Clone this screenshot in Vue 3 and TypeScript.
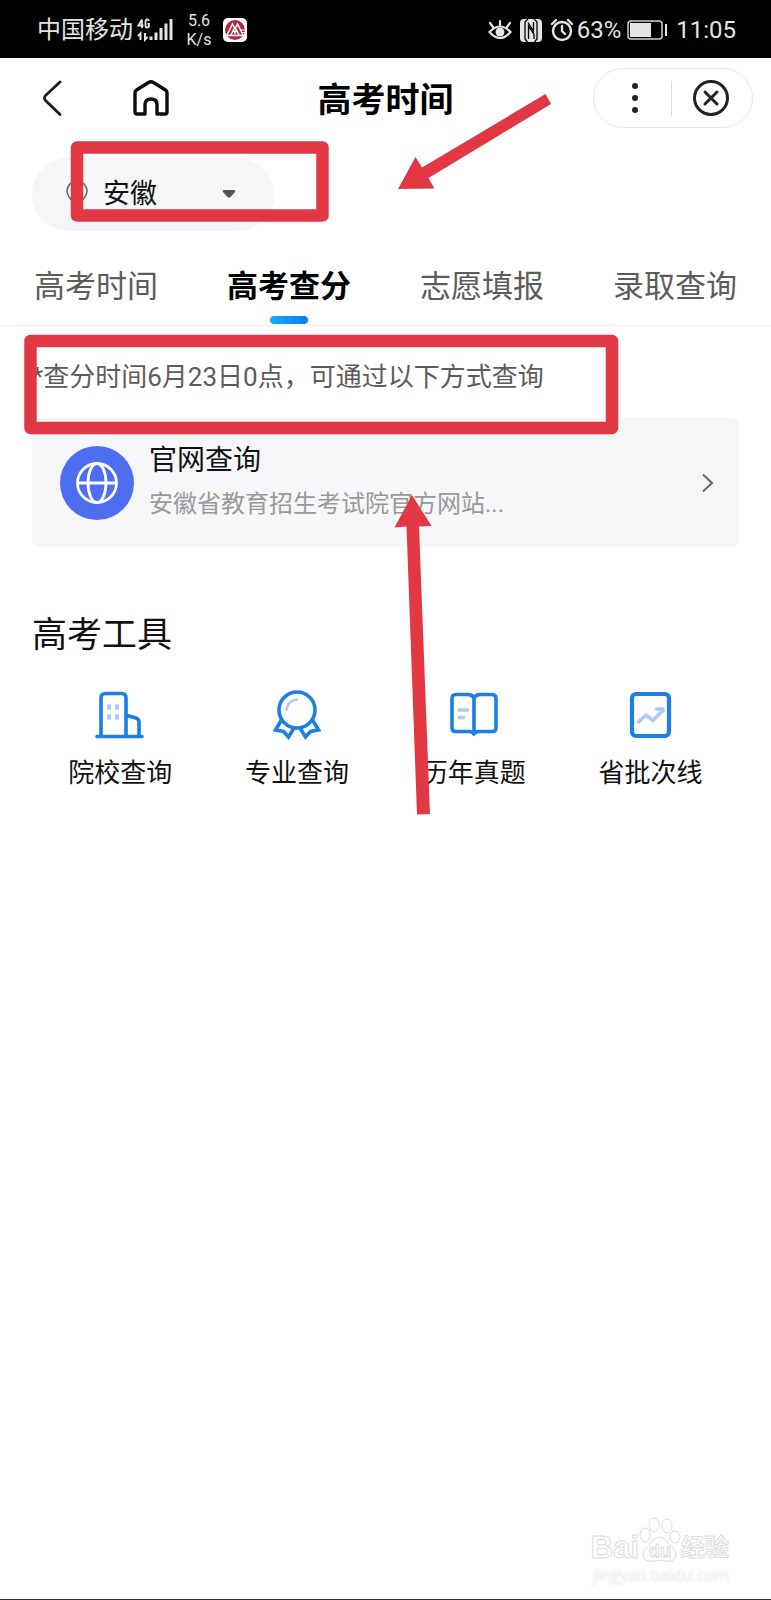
<script setup lang="ts">
import { ref } from 'vue'

interface Tool {
  id: string
  label: string
}

const provinces: string[] = ['安徽', '北京', '江苏', '浙江']
const province = ref<string>('安徽')

const tabs: string[] = ['高考时间', '高考查分', '志愿填报', '录取查询']
const activeTab = ref<string>('高考查分')

const tools: Tool[] = [
  { id: 'school', label: '院校查询' },
  { id: 'major', label: '专业查询' },
  { id: 'papers', label: '历年真题' },
  { id: 'lines', label: '省批次线' },
]
</script>

<template>
  <div class="page">
    <div class="status">
      <div class="status-side">
        <span class="carrier">中国移动</span>
        <svg class="signal" width="36" height="24" viewBox="0 0 36 24" fill="none" stroke="#e4e4e4">
          <path d="M5 1.500L1.500 7.500H6.500M5 1.500V10M12 3Q11.500 1.500 10 1.500Q8.500 1.500 8.500 4V7.500Q8.500 9.500 10 9.500Q12 9.500 12 7.500V6H10.500" stroke-width="1.800" />
          <path d="M3.500 22V15.500L1 18M8 15V21.500L10.500 19" stroke-width="2" />
          <path d="M14 22V18.500M19 22V14.500M24 22V10M29 22V5.500M34 22V1" stroke-width="3" />
        </svg>
        <span class="speed"><span>5.6</span><span>K/s</span></span>
        <svg class="bank" width="24" height="24" viewBox="0 0 24 24">
          <rect width="24" height="24" rx="5" fill="#fff" />
          <circle cx="12" cy="12" r="10" fill="#b5253c" />
          <path d="M4 17L9.500 6L12 11L14.500 6L20 17M8 17L10.500 12L12 15L13.500 12L16 17M3 17.500H21" fill="none" stroke="#fff" stroke-width="1.500" />
          <path d="M17 12H23M18 14.500H23" stroke="#fff" stroke-width="1" />
        </svg>
      </div>
      <div class="status-side">
        <svg width="24" height="22" viewBox="0 0 24 22" fill="none" stroke="#e4e4e4" stroke-width="2.200" stroke-linecap="round">
          <path d="M1.500 13Q12 2 22.500 13Q12 25 1.500 13ZM12 6V2M5 8L2 4M19 8L22 4" />
          <circle cx="12" cy="13" r="4.500" fill="#e4e4e4" stroke="none" />
        </svg>
        <svg class="nfc" width="22" height="23" viewBox="0 0 22 23">
          <rect width="22" height="23" rx="4" fill="#e4e4e4" />
          <path d="M8 0L5 3V20L7.500 23M8.500 20V7L14 15.500V20M8 3.500L13.500 12V3M14 0L17 3V20L14.500 23" fill="none" stroke="#000" stroke-width="1.300" />
        </svg>
        <svg class="alarm" width="24" height="24" viewBox="0 0 24 24" fill="none" stroke="#e4e4e4" stroke-width="2.400" stroke-linecap="round">
          <circle cx="12" cy="13" r="9" />
          <path d="M12 8V13L15 16M2 6L6 2M22 6L18 2" />
        </svg>
        <span class="battery-text">63%</span>
        <svg class="battery" width="41" height="20" viewBox="0 0 41 20">
          <rect x="1" y="1" width="34" height="18" rx="3" fill="none" stroke="#cfcfcf" stroke-width="1.500" />
          <rect x="3" y="3" width="21" height="14" fill="#e4e4e4" />
          <rect x="38" y="4" width="2" height="12" fill="#e4e4e4" />
        </svg>
        <span class="clock">11:05</span>
      </div>
    </div>

    <header class="header">
      <div class="nav">
        <button type="button" class="plain" aria-label="返回">
          <svg width="20" height="36" viewBox="0 0 20 36" fill="none" stroke="#1c1c1c" stroke-width="2.800" stroke-linecap="round" stroke-linejoin="round">
            <path d="M18 2L3.500 15.500Q1.500 18 3.500 20.500L18 34.500" />
          </svg>
        </button>
        <button type="button" class="plain" aria-label="主页">
          <svg width="36" height="36" viewBox="0 0 36 36" fill="none" stroke="#0e0e0e" stroke-width="3.400" stroke-linejoin="round">
            <path d="M2 12.500Q2 11 3.500 10L15.500 2.500Q18 1 20.500 2.500L32.500 10Q34 11 34 12.500V32Q34 34 32 34H24V24.500Q24 19 18 19Q12 19 12 24.500V34H4Q2 34 2 32Z" />
          </svg>
        </button>
      </div>
      <h1 class="title">高考时间</h1>
      <div class="capsule">
        <button type="button" class="plain" aria-label="更多">
          <svg width="8" height="32" viewBox="0 0 8 32" fill="#222">
            <circle cx="4" cy="4" r="3" /><circle cx="4" cy="16" r="3" /><circle cx="4" cy="28" r="3" />
          </svg>
        </button>
        <span class="divider"></span>
        <button type="button" class="plain" aria-label="关闭">
          <svg width="38" height="38" viewBox="0 0 38 38" fill="none" stroke="#222" stroke-width="3" stroke-linecap="round">
            <circle cx="19" cy="19" r="16.500" />
            <path d="M13 13L25 25M25 13L13 25" />
          </svg>
        </button>
      </div>
    </header>

    <main>
      <label class="province">
        <svg width="22" height="28" viewBox="0 0 22 28" fill="none" stroke="#666" stroke-width="1.500">
          <path d="M11 26Q1 17 1 11A10 10 0 0 1 21 11Q21 17 11 26Z" />
        </svg>
        <select v-model="province" aria-label="省份">
          <option v-for="p in provinces" :key="p" :value="p">{{ p }}</option>
        </select>
        <svg class="caret" width="14" height="10" viewBox="0 0 14 10" fill="#555">
          <path d="M1.500 1H12.500Q14 1.500 13 3L8.500 8Q7 9.500 5.500 8L1 3Q0 1.500 1.500 1Z" />
        </svg>
      </label>

      <nav class="tabs">
        <button
          v-for="t in tabs"
          :key="t"
          type="button"
          class="tab"
          :class="{ active: t === activeTab }"
          @click="activeTab = t"
        >
          <span>{{ t }}</span>
          <i class="bar"></i>
        </button>
      </nav>

      <p class="notice">*查分时间6月23日0点，可通过以下方式查询</p>

      <a class="card" href="#">
        <svg class="globe" width="74" height="74" viewBox="0 0 74 74" fill="none" stroke="#fff" stroke-width="2.800">
          <circle cx="37" cy="37" r="37" fill="#4e6ef2" stroke="none" />
          <circle cx="37" cy="37" r="19.500" />
          <ellipse cx="37" cy="37" rx="9" ry="19.500" />
          <path d="M17 37H57" />
        </svg>
        <span class="card-text">
          <strong>官网查询</strong>
          <small>安徽省教育招生考试院官方网站...</small>
        </span>
        <svg width="12" height="20" viewBox="0 0 12 20" fill="none" stroke="#666" stroke-width="2">
          <path d="M1 1.500L10 10L1 18.500" />
        </svg>
      </a>

      <section>
        <h2 class="section-title">高考工具</h2>
        <div class="tools">
          <a v-for="tool in tools" :key="tool.id" class="tool" href="#">
            <svg width="50" height="50" viewBox="0 0 50 50" fill="none" stroke="#1a7fe8" stroke-width="3.600" stroke-linecap="round" stroke-linejoin="round">
              <template v-if="tool.id === 'school'">
                <path d="M2 46.500H47M6 46V8Q6 3.500 10.500 3.500H26.500Q31 3.500 31 8V46M32 25.500L41 28Q44 29 44 32V46" />
                <g fill="#a9cbf5" stroke="none">
                  <rect x="12" y="14" width="4" height="6" rx="2" /><rect x="20" y="14" width="4" height="6" rx="2" />
                  <rect x="12" y="24" width="4" height="6" rx="2" /><rect x="20" y="24" width="4" height="6" rx="2" />
                </g>
              </template>
              <template v-else-if="tool.id === 'major'">
                <circle cx="25" cy="20" r="18" />
                <path d="M9.500 30L3.500 40L11.500 41.500L16.500 47L22 38M40.500 30L46.500 40L38.500 41.500L33.500 47L28 38" stroke-linejoin="miter" />
                <path d="M14.500 20Q15.500 10.500 25 9.500" stroke="#a9cbf5" stroke-width="2.500" />
              </template>
              <template v-else-if="tool.id === 'papers'">
                <path d="M25 8Q23 4.500 19 4.500H7Q3 4.500 3 8.500V38Q3 41.500 6.500 41.500H20Q23.500 41.500 25 44Q26.500 41.500 30 41.500H43.500Q47 41.500 47 38V8.500Q47 4.500 43 4.500H31Q27 4.500 25 8ZM25 8V43" />
                <path d="M10 20H18.500M10 27.500H14.500" stroke="#a9cbf5" />
              </template>
              <template v-else>
                <rect x="6" y="4" width="37" height="42" rx="4" stroke-width="4.200" />
                <path d="M12.500 32L20 25L27 30.500L37 20M30.500 19H37V21" stroke="#a9cbf5" />
              </template>
            </svg>
            <span>{{ tool.label }}</span>
          </a>
        </div>
      </section>
    </main>

    <svg class="marks" width="771" height="830" viewBox="0 0 771 830" aria-hidden="true">
      <g fill="none" stroke="#e23844" stroke-width="12.500" stroke-linejoin="round">
        <rect x="77" y="147.500" width="245.500" height="68" />
        <rect x="30.500" y="341" width="581.500" height="87" />
      </g>
      <g fill="#e23844">
        <path d="M398 189L415.500 157L422 167.500L545.500 94L551 104L428.500 178L434.500 188.500Z" />
        <path d="M412 495L431.500 526L419 526.500L430 814L417 814.500L406.500 526.500L394.500 527.500Z" />
      </g>
    </svg>

    <div class="watermark">
      <div class="brand">
        <span class="bai">Bai</span>
        <span class="paw">
          <svg width="42" height="46" viewBox="0 0 42 46" fill="#fff" stroke="#dcdcdc">
            <ellipse cx="6" cy="18" rx="5" ry="7" /><ellipse cx="15" cy="8" rx="5" ry="7" />
            <ellipse cx="28" cy="9" rx="5" ry="7" /><ellipse cx="36" cy="20" rx="5" ry="6" />
            <path d="M20 20Q26 20 29 26Q38 34 37 39Q35 46 27 44Q20 43 14 44Q5 46 4 38Q4 33 11 27Q15 20 20 20Z" />
          </svg>
          <span class="du">du</span>
        </span>
        <span class="jingyan">经验</span>
      </div>
      <div class="url">jingyan.baidu.com</div>
    </div>
  </div>
</template>

<style>
body {
  margin: 0;
  background: #fff;
}
</style>

<style scoped>
.page {
  position: relative;
  box-sizing: border-box;
  min-height: 100vh;
  border-bottom: 1px solid #333;
  background: #fff;
  color: #111;
  font-family: Roboto, "Noto Sans CJK SC", sans-serif;
}
svg {
  display: block;
  flex: none;
}
button,
select {
  padding: 0;
  border: 0;
  background: none;
  color: inherit;
  font-family: inherit;
}
a {
  color: inherit;
  text-decoration: none;
}
.status {
  display: flex;
  justify-content: space-between;
  box-sizing: border-box;
  height: 58px;
  padding: 2px 35px 0 37px;
  background: #000;
  color: #e4e4e4;
}
.status-side {
  display: flex;
  align-items: center;
}
.carrier {
  font-size: 24px;
  line-height: 36px;
}
.signal {
  margin-left: 4px;
}
.speed {
  display: flex;
  flex-direction: column;
  align-items: center;
  width: 24px;
  margin-left: 14px;
  font-size: 16px;
  line-height: 19px;
}
.bank {
  margin-left: 12px;
}
.nfc {
  margin-left: 8px;
}
.alarm {
  margin-left: 8px;
}
.battery-text {
  margin-left: 3px;
  font-size: 24px;
}
.battery {
  margin-left: 6px;
}
.clock {
  margin-left: 8px;
  font-size: 24px;
}
.header {
  display: grid;
  grid-template-columns: 1fr auto 1fr;
  align-items: center;
  height: 80px;
  padding: 0 18px 0 42px;
}
.nav {
  display: flex;
  gap: 71px;
}
.title {
  margin: 0 24px 0 0;
  padding-top: 4px;
  font-size: 34px;
  font-weight: 700;
  line-height: 50px;
  color: #000;
}
.plain {
  display: flex;
}
.capsule {
  display: flex;
  align-items: center;
  justify-self: end;
  justify-content: space-between;
  box-sizing: border-box;
  width: 160px;
  height: 60px;
  padding: 0 22px 0 37px;
  border: 1px solid #e8e8e8;
  border-radius: 30px;
}
.divider {
  width: 1px;
  height: 35px;
  margin-left: 12px;
  background: #ddd;
}
.province {
  display: flex;
  align-items: center;
  box-sizing: border-box;
  width: 242px;
  height: 73px;
  margin: 20px 0 0 32px;
  padding: 0 38px 2px 34px;
  border-radius: 37px;
  background: #f5f6f8;
}
.province select {
  flex: 1;
  min-width: 0;
  margin-left: 15px;
  appearance: none;
  font-size: 27px;
  line-height: 40px;
  outline: none;
}
.tabs {
  display: flex;
  justify-content: space-between;
  padding: 33px 34px 1px;
  border-bottom: 1px solid #f0f0f2;
}
.tab {
  display: flex;
  flex-direction: column;
  align-items: center;
  gap: 6px;
  font-size: 31px;
  line-height: 46px;
  color: #5c5c5c;
}
.tab.active {
  font-weight: 700;
  color: #000;
}
.bar {
  width: 38px;
  height: 8px;
  border-radius: 4px;
}
.active .bar {
  background: linear-gradient(90deg, #16aef8, #0f78f2);
}
.notice {
  margin: 0;
  padding: 32px 32px 22px;
  font-size: 26px;
  line-height: 38px;
  color: #5c5c5c;
}
.card {
  display: flex;
  align-items: center;
  height: 129px;
  margin: 0 32px;
  padding: 0 25px 0 28px;
  box-sizing: border-box;
  border-radius: 8px;
  background: #f5f6f8;
}
.card-text {
  display: flex;
  flex: 1;
  flex-direction: column;
  gap: 7px;
  margin-left: 15px;
}
.card-text strong {
  font-size: 28px;
  font-weight: 400;
  line-height: 36px;
}
.card-text small {
  font-size: 24px;
  line-height: 36px;
  color: #999;
}
.section-title {
  margin: 64px 32px 29px;
  font-size: 35px;
  font-weight: 400;
  line-height: 50px;
}
.tools {
  display: grid;
  grid-template-columns: repeat(4, 1fr);
  padding: 0 32px;
}
.tool {
  display: flex;
  flex-direction: column;
  align-items: center;
  gap: 14px;
  font-size: 26px;
  line-height: 38px;
}
.marks {
  position: absolute;
  top: 0;
  left: 0;
  pointer-events: none;
}
.watermark {
  position: absolute;
  right: 42px;
  bottom: 12px;
  color: #fff;
  font-family: "Liberation Sans", "Noto Sans CJK SC", sans-serif;
}
.brand {
  display: flex;
  align-items: flex-end;
  font-weight: 700;
  -webkit-text-stroke: 1px #dcdcdc;
}
.bai {
  font-size: 31px;
  line-height: 30px;
}
.paw {
  display: grid;
  justify-items: center;
  align-items: end;
}
.paw > * {
  grid-area: 1 / 1;
}
.du {
  font-size: 18px;
  line-height: 24px;
}
.jingyan {
  font-size: 24px;
  line-height: 30px;
}
.url {
  font-family: "Open Sans", sans-serif;
  font-size: 16px;
  line-height: 24px;
  text-align: right;
  text-shadow: 0 0 2px #ccc;
}
</style>
